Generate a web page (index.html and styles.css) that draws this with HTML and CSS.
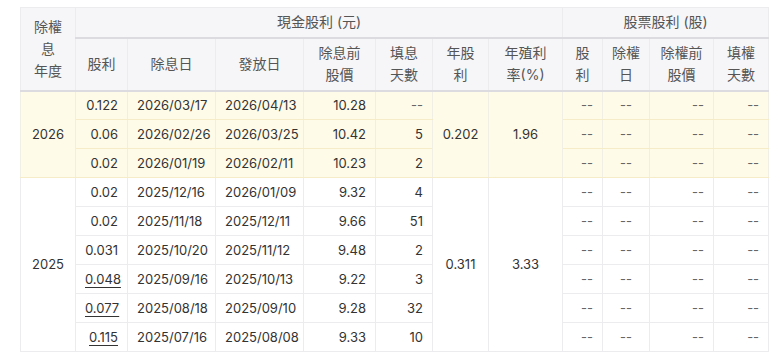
FILE: index.html
```html
<!DOCTYPE html>
<html lang="zh-Hant">
<head>
  <meta charset="UTF-8">
  <title>股利政策</title>
  <link rel="stylesheet" href="styles.css">
</head>
<body>
  <div class="wrap">
    <table class="div-table">
      <colgroup>
        <col style="width:55px"><col style="width:52px"><col style="width:88px"><col style="width:88px">
        <col style="width:72px"><col style="width:57px"><col style="width:56px"><col style="width:74px">
        <col style="width:40px"><col style="width:47px"><col style="width:64px"><col style="width:55px">
      </colgroup>
      <thead>
        <tr class="head-top">
          <th rowspan="2" class="year-head">除權<br>息<br>年度</th>
          <th colspan="7" class="group">現金股利 (元)</th>
          <th colspan="4" class="group">股票股利 (股)</th>
        </tr>
        <tr class="head-sub">
          <th>股利</th>
          <th>除息日</th>
          <th>發放日</th>
          <th>除息前<br>股價</th>
          <th>填息<br>天數</th>
          <th>年股<br>利</th>
          <th>年殖利<br>率(%)</th>
          <th>股<br>利</th>
          <th>除權<br>日</th>
          <th>除權前<br>股價</th>
          <th>填權<br>天數</th>
        </tr>
      </thead>
      <tbody class="hl">
        <tr>
          <td rowspan="3" class="c">2026</td>
          <td class="r">0.122</td><td class="l">2026/03/17</td><td class="l">2026/04/13</td>
          <td class="r">10.28</td><td class="r na">--</td>
          <td rowspan="3" class="c">0.202</td><td rowspan="3" class="c">1.96</td>
          <td class="r na">--</td><td class="c na">--</td><td class="r na">--</td><td class="r na">--</td>
        </tr>
        <tr>
          <td class="r">0.06</td><td class="l">2026/02/26</td><td class="l">2026/03/25</td>
          <td class="r">10.42</td><td class="r">5</td>
          <td class="r na">--</td><td class="c na">--</td><td class="r na">--</td><td class="r na">--</td>
        </tr>
        <tr>
          <td class="r">0.02</td><td class="l">2026/01/19</td><td class="l">2026/02/11</td>
          <td class="r">10.23</td><td class="r">2</td>
          <td class="r na">--</td><td class="c na">--</td><td class="r na">--</td><td class="r na">--</td>
        </tr>
      </tbody>
      <tbody>
        <tr>
          <td rowspan="6" class="c">2025</td>
          <td class="r">0.02</td><td class="l">2025/12/16</td><td class="l">2026/01/09</td>
          <td class="r">9.32</td><td class="r">4</td>
          <td rowspan="6" class="c">0.311</td><td rowspan="6" class="c">3.33</td>
          <td class="r na">--</td><td class="c na">--</td><td class="r na">--</td><td class="r na">--</td>
        </tr>
        <tr>
          <td class="r">0.02</td><td class="l">2025/11/18</td><td class="l">2025/12/11</td>
          <td class="r">9.66</td><td class="r">51</td>
          <td class="r na">--</td><td class="c na">--</td><td class="r na">--</td><td class="r na">--</td>
        </tr>
        <tr>
          <td class="r">0.031</td><td class="l">2025/10/20</td><td class="l">2025/11/12</td>
          <td class="r">9.48</td><td class="r">2</td>
          <td class="r na">--</td><td class="c na">--</td><td class="r na">--</td><td class="r na">--</td>
        </tr>
        <tr>
          <td class="r"><span class="link">0.048</span></td><td class="l">2025/09/16</td><td class="l">2025/10/13</td>
          <td class="r">9.22</td><td class="r">3</td>
          <td class="r na">--</td><td class="c na">--</td><td class="r na">--</td><td class="r na">--</td>
        </tr>
        <tr>
          <td class="r"><span class="link">0.077</span></td><td class="l">2025/08/18</td><td class="l">2025/09/10</td>
          <td class="r">9.28</td><td class="r">32</td>
          <td class="r na">--</td><td class="c na">--</td><td class="r na">--</td><td class="r na">--</td>
        </tr>
        <tr>
          <td class="r"><span class="link">0.115</span></td><td class="l">2025/07/16</td><td class="l">2025/08/08</td>
          <td class="r">9.33</td><td class="r">10</td>
          <td class="r na">--</td><td class="c na">--</td><td class="r na">--</td><td class="r na">--</td>
        </tr>
      </tbody>
    </table>
  </div>
</body>
</html>
```

FILE: styles.css
```css
* {
  margin: 0;
  padding: 0;
  box-sizing: border-box;
}
body {
  background: #fff;
  color: #333;
  font-family: Inter, "Noto Sans CJK TC", sans-serif;
  font-size: 13px;
}
.wrap {
  padding: 7px 12px 0 20px;
}
.div-table {
  width: 748px;
  table-layout: fixed;
  border-collapse: collapse;
  border: 1px solid #e4e4e8;
}
th, td {
  border: 1px solid #ececef;
  white-space: nowrap;
}
th {
  background: #f6f6f8;
  color: #555;
  font-size: 14px;
  font-weight: normal;
  line-height: 22px;
  text-align: center;
}
.head-top th {
  height: 30px;
}
.head-top .group {
  border-bottom: 2px solid #dcdce0;
}
.head-sub th {
  height: 53px;
  border-bottom: 2px solid #dcdce0;
}
.year-head {
  border-bottom: 2px solid #dcdce0;
}
td {
  height: 29px;
  padding: 0 9px;
  line-height: 21px;
}
td.r { text-align: right; }
td.l { text-align: left; }
td.c { text-align: center; }
td.na { color: #666; }
.hl td {
  background: #fffbe9;
  border-color: #f7ecc8 #efefe6;
}
.link {
  text-decoration: underline;
  text-underline-offset: 3px;
}
```
